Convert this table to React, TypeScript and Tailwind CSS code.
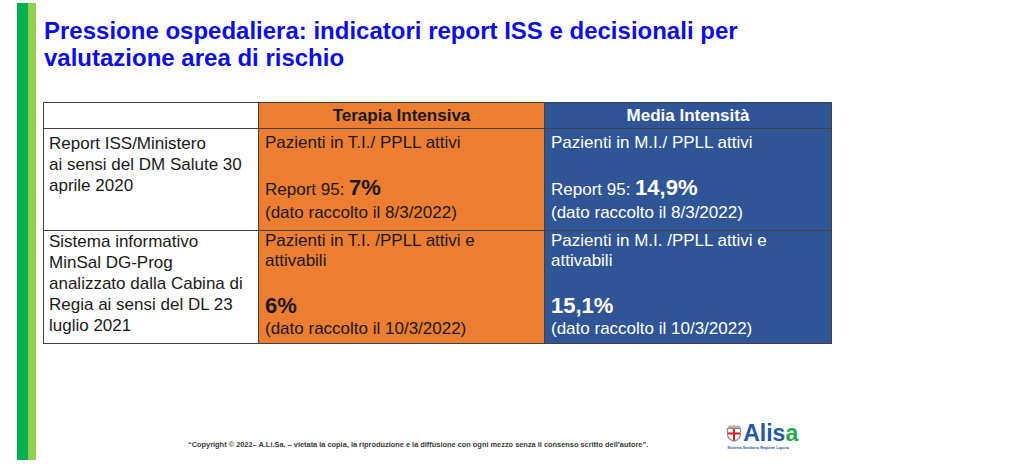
import React from "react";

const font = { fontFamily: '"Liberation Sans", Arial, sans-serif' };

function Crest() {
  return (
    <svg width="16" height="18" viewBox="0 0 16 18">
      <path d="M2 2.5 L4 1 L6 2.2 L8 0.8 L10 2.2 L12 1 L14 2.5 L14 4 L2 4 Z" fill="#b0b0b0" />
      <path d="M1.5 4.5 H14.5 V10 Q14.5 15 8 17.2 Q1.5 15 1.5 10 Z" fill="#ffffff" stroke="#8a8a8a" strokeWidth="1.2" />
      <rect x="7" y="5" width="2" height="11.5" fill="#e02020" />
      <rect x="2" y="8.5" width="12" height="2" fill="#e02020" />
    </svg>
  );
}

export default function App() {
  return (
    <div className="w-[1024px] h-[469px] bg-white flex overflow-hidden" style={font}>
      <div className="ml-[17px] mt-[3px] h-[457px] flex shrink-0">
        <div className="w-[11px] bg-[#00b050]" />
        <div className="w-[8px] bg-[#92d050]" />
      </div>
      <div className="ml-[7px] flex flex-col">
        <h1 className="mt-[17px] ml-[1px] text-[24px] leading-[27px] font-bold text-[#0d0de6]">
          Pressione ospedaliera: indicatori report ISS e decisionali per
          <br />
          valutazione area di rischio
        </h1>
        <table className="mt-[31px] border-collapse border border-[#7f7f7f] text-[17px] text-[#1a1a1a] table-fixed w-[788px]">
          <colgroup>
            <col className="w-[215px]" />
            <col className="w-[286px]" />
            <col className="w-[287px]" />
          </colgroup>
          <tbody>
            <tr className="h-[26px]">
              <td className="bg-white border border-[#404040]" />
              <td className="bg-[#ed7d31] border border-[#404040] text-center font-bold leading-[24px] text-[#1a1a1a]">
                Terapia Intensiva
              </td>
              <td className="bg-[#2f5597] border border-[#404040] text-center font-bold leading-[24px] text-white">
                Media Intensità
              </td>
            </tr>
            <tr className="h-[102px]">
              <td className="align-top bg-white border border-[#404040] pl-[5px] pt-[4px] leading-[21px]">
                Report ISS/Ministero
                <br />
                ai sensi del DM Salute 30
                <br />
                aprile 2020
              </td>
              <td className="align-top bg-[#ed7d31] border border-[#404040] pl-[6px] pt-[4px]">
                <div className="leading-[20px]">Pazienti in T.I./ PPLL attivi</div>
                <div className="mt-[22px] leading-[26px]">
                  Report 95: <span className="text-[22px] font-bold">7%</span>
                </div>
                <div className="leading-[20px]">(dato raccolto il 8/3/2022)</div>
              </td>
              <td className="align-top bg-[#2f5597] border border-[#404040] pl-[6px] pt-[4px] text-white">
                <div className="leading-[20px]">Pazienti in M.I./ PPLL attivi</div>
                <div className="mt-[22px] leading-[26px]">
                  Report 95: <span className="text-[22px] font-bold">14,9%</span>
                </div>
                <div className="leading-[20px]">(dato raccolto il 8/3/2022)</div>
              </td>
            </tr>
            <tr className="h-[113px]">
              <td className="align-top bg-white border border-[#404040] pl-[5px] pt-[0px] leading-[21px]">
                Sistema informativo
                <br />
                MinSal DG-Prog
                <br />
                analizzato dalla Cabina di
                <br />
                Regia ai sensi del DL 23
                <br />
                luglio 2021
              </td>
              <td className="align-top bg-[#ed7d31] border border-[#404040] pl-[6px] pt-[0px]">
                <div className="leading-[20px]">
                  Pazienti in T.I. /PPLL attivi e
                  <br />
                  attivabili
                </div>
                <div className="mt-[22px] leading-[26px] text-[22px] font-bold">6%</div>
                <div className="leading-[20px]">(dato raccolto il 10/3/2022)</div>
              </td>
              <td className="align-top bg-[#2f5597] border border-[#404040] pl-[6px] pt-[0px] text-white">
                <div className="leading-[20px]">
                  Pazienti in M.I. /PPLL attivi e
                  <br />
                  attivabili
                </div>
                <div className="mt-[22px] leading-[26px] text-[22px] font-bold">15,1%</div>
                <div className="leading-[20px]">(dato raccolto il 10/3/2022)</div>
              </td>
            </tr>
          </tbody>
        </table>
        <div className="mt-[78px] flex items-end">
          <div className="ml-[145px] mb-[2px] text-[7.4px] leading-[8px] font-bold text-[#3a3a3a] whitespace-nowrap">
            “Copyright © 2022– A.Li.Sa. – vietata la copia, la riproduzione e la diffusione con ogni mezzo senza il consenso scritto dell’autore”.
          </div>
          <div className="ml-[78px] flex flex-col items-start">
            <div className="flex items-center gap-[1px]">
              <Crest />
              <span className="text-[23px] leading-[22px] font-bold text-[#1e5aa8]">
                Alis<span className="text-[#27a844]">a</span>
              </span>
            </div>
            <div className="mt-[2px] ml-[1px] text-[3.8px] leading-[5px] font-bold text-[#1e5aa8] whitespace-nowrap">
              Sistema Sanitario Regione Liguria
            </div>
          </div>
        </div>
      </div>
    </div>
  );
}
